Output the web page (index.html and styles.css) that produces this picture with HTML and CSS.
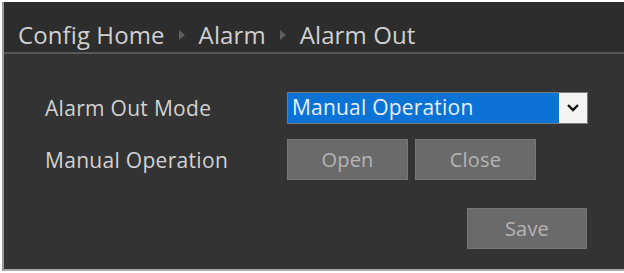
FILE: index.html
```html
<!DOCTYPE html>
<html>
  <head>
    <title>Alarm Out</title>
    <link rel="stylesheet" href="styles.css">
  </head>
  <body>
    <div class="panel">
      <div class="crumbs">
        <span>Config Home</span>
        <i class="arrow"></i>
        <span>Alarm</span>
        <i class="arrow"></i>
        <span>Alarm Out</span>
      </div>
      <div class="form">
        <div class="row">
          <label>Alarm Out Mode</label>
          <div class="select">
            <span class="value">Manual Operation</span>
            <span class="drop">
              <svg width="14" height="10" viewBox="0 0 14 10"><path d="M2 2 L7 7 L12 2" fill="none" stroke="#111" stroke-width="2.4"/></svg>
            </span>
          </div>
        </div>
        <div class="row">
          <label>Manual Operation</label>
          <div class="btns">
            <button class="btn">Open</button>
            <button class="btn">Close</button>
          </div>
        </div>
        <div class="foot">
          <button class="btn">Save</button>
        </div>
      </div>
    </div>
  </body>
</html>
```
FILE: styles.css
```css
* {
    margin: 0;
    box-sizing: border-box;
}
html, body {
    background: #fff;
}
body {
    padding: 2px 0 0 2px;
    font-family: "Open Sans", "Liberation Sans", sans-serif;
    color: #cfcfcf;
}
.panel {
    width: 630px;
    height: 269px;
    background: #333;
    border-left: 2px solid #9a9a9a;
    border-bottom: 2px solid #a8a8a8;
}
.crumbs {
    height: 52px;
    padding: 14px 0 0 14px;
    background: #2d2d2d;
    border-bottom: 2px solid #575757;
    display: flex;
    align-items: center;
    gap: 14px;
    font-size: 24px;
    letter-spacing: 0.1px;
    color: #d0d0d0;
}
.arrow {
    width: 0;
    height: 0;
    margin-top: 2px;
    border-left: 6px solid #5e5e5e;
    border-top: 5px solid transparent;
    border-bottom: 5px solid transparent;
}
.form {
    padding: 38px 0 0 41px;
}
.row {
    display: flex;
    align-items: center;
    height: 32px;
    margin-bottom: 15px;
}
.row:nth-child(2) {
    height: 41px;
}
.row label {
    width: 242px;
    font-size: 21px;
    letter-spacing: 0.3px;
    color: #d2d2d2;
}
.select {
    width: 301px;
    height: 32px;
    display: flex;
    border: 1px solid #7a7a7a;
}
.value {
    flex: 1;
    background: #0b72d6;
    color: #e8f1fb;
    font-size: 21px;
    letter-spacing: 0.2px;
    padding-left: 4px;
    line-height: 29px;
}
.drop {
    width: 28px;
    background: #f4f4f4;
    display: flex;
    align-items: center;
    justify-content: center;
}
.btns {
    display: flex;
    gap: 7px;
}
.btn {
    width: 121px;
    height: 41px;
    background: #6a6a6a;
    border: 1px solid #767676;
    color: #b4b4b4;
    font-family: inherit;
    font-size: 20px;
    letter-spacing: 0.2px;
}
.foot {
    display: flex;
    padding: 13px 0 0 422px;
}
.foot .btn {
    width: 120px;
}
```
